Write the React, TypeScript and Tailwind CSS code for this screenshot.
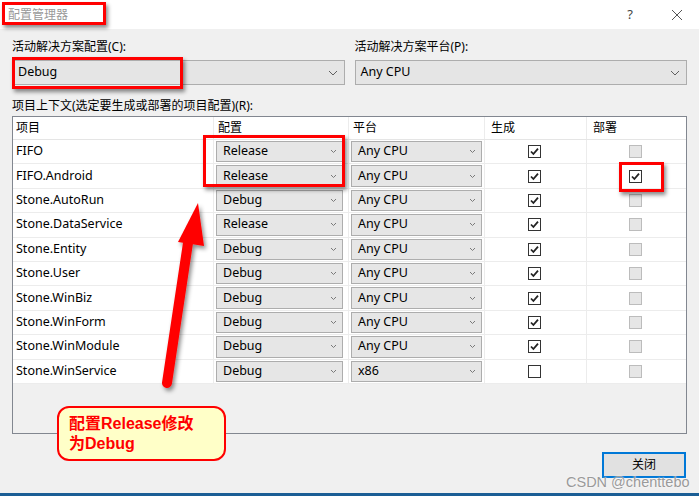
import type { ReactNode } from "react";

type Row = {
  name: string;
  config: string;
  platform: string;
  build: boolean;
  deploy: boolean;
};

const rows: Row[] = [
  { name: "FIFO", config: "Release", platform: "Any CPU", build: true, deploy: false },
  { name: "FIFO.Android", config: "Release", platform: "Any CPU", build: true, deploy: true },
  { name: "Stone.AutoRun", config: "Debug", platform: "Any CPU", build: true, deploy: false },
  { name: "Stone.DataService", config: "Release", platform: "Any CPU", build: true, deploy: false },
  { name: "Stone.Entity", config: "Debug", platform: "Any CPU", build: true, deploy: false },
  { name: "Stone.User", config: "Debug", platform: "Any CPU", build: true, deploy: false },
  { name: "Stone.WinBiz", config: "Debug", platform: "Any CPU", build: true, deploy: false },
  { name: "Stone.WinForm", config: "Debug", platform: "Any CPU", build: true, deploy: false },
  { name: "Stone.WinModule", config: "Debug", platform: "Any CPU", build: true, deploy: false },
  { name: "Stone.WinService", config: "Debug", platform: "x86", build: false, deploy: false },
];

const cols = "grid grid-cols-[201px_135px_136px_102px_1fr]";

function Chevron({ small }: { small?: boolean }) {
  return small ? (
    <svg width="7" height="5" viewBox="0 0 7 5" className="shrink-0">
      <path d="M1 1 L3.5 3.5 L6 1" fill="none" stroke="#7a7a7a" strokeWidth="1" />
    </svg>
  ) : (
    <svg width="10" height="6" viewBox="0 0 10 6" className="shrink-0">
      <path d="M1 1 L5 5 L9 1" fill="none" stroke="#606060" strokeWidth="1" />
    </svg>
  );
}

function Combo({ value }: { value: string }) {
  return (
    <div className="flex h-[25px] items-center justify-between border border-[#adadad] bg-[#e5e5e5] pl-[5px] pr-[6px] text-[12.5px] text-black">
      <span>{value}</span>
      <Chevron />
    </div>
  );
}

function CellCombo({ value }: { value: string }) {
  return (
    <div className="flex h-full items-center justify-between border border-[#adadad] bg-[#e6e6e6] pl-[6px] pr-[5px] text-[12.5px] text-black">
      <span>{value}</span>
      <Chevron small />
    </div>
  );
}

function Check({ checked, disabled }: { checked: boolean; disabled?: boolean }) {
  if (disabled) {
    return <div className="h-[13px] w-[13px] border border-[#bcbcbc] bg-[#e6e6e6]" />;
  }
  return (
    <div className="flex h-[13px] w-[13px] items-center justify-center border border-[#333333] bg-white">
      {checked && (
        <svg width="11" height="11" viewBox="0 0 11 11">
          <path d="M2 5.5 L4.4 8 L9 2.6" fill="none" stroke="#222" strokeWidth="1.8" />
        </svg>
      )}
    </div>
  );
}

function Cell({ children, className = "" }: { children: ReactNode; className?: string }) {
  return (
    <div className={`flex items-center border-r border-[#ececec] ${className}`}>{children}</div>
  );
}

function RedBox({ className }: { className: string }) {
  return (
    <div
      className={`pointer-events-none absolute border-[3px] border-[#ff0000] shadow-[2px_3px_4px_rgba(0,0,0,0.45)] ${className}`}
    />
  );
}

export default function App() {
  return (
    <div className="relative flex h-[496px] w-[699px] flex-col overflow-hidden bg-[#f0f0f0] font-['Noto_Sans','Noto_Sans_CJK_SC',sans-serif] text-[12px] text-black">
      {/* title bar */}
      <div className="flex h-[29px] shrink-0 items-center justify-between bg-white pl-[8px]">
        <span className="text-[12px] text-[#999999]">配置管理器</span>
        <div className="flex items-center text-[#444]">
          <span className="mr-[38px] text-[13px]">?</span>
          <svg width="12" height="12" viewBox="0 0 12 12" className="mr-[16px]">
            <path d="M1 1 L11 11 M11 1 L1 11" stroke="#555" strokeWidth="1" />
          </svg>
        </div>
      </div>

      {/* body */}
      <div className="flex flex-1 flex-col px-[12px] pt-[10px]">
        <div className="grid grid-cols-2 gap-[10px]">
          <div>
            <div className="h-[16px] leading-[16px]">活动解决方案配置(C):</div>
            <div className="mt-[5px]">
              <Combo value="Debug" />
            </div>
          </div>
          <div>
            <div className="h-[16px] leading-[16px]">活动解决方案平台(P):</div>
            <div className="mt-[5px]">
              <Combo value="Any CPU" />
            </div>
          </div>
        </div>

        <div className="mt-[13px] h-[16px] leading-[16px]">项目上下文(选定要生成或部署的项目配置)(R):</div>

        <div className="mt-[2px] flex h-[318px] flex-col border border-[#828790]">
          <div className={`${cols} h-[23px] shrink-0 border-b border-[#e5e5e5] bg-white`}>
            <Cell className="pl-[3px]">项目</Cell>
            <Cell className="pl-[4px]">配置</Cell>
            <Cell className="pl-[4px]">平台</Cell>
            <Cell className="pl-[6px]">生成</Cell>
            <div className="flex items-center pl-[6px]">部署</div>
          </div>
          {rows.map((r) => (
            <div
              key={r.name}
              className={`${cols} h-[24.4px] shrink-0 border-b border-[#ececec] bg-white text-[12.5px]`}
            >
              <Cell className="pl-[3px]">{r.name}</Cell>
              <Cell className="py-[1px] pl-[2px] pr-[5px]">
                <div className="h-full w-full">
                  <CellCombo value={r.config} />
                </div>
              </Cell>
              <Cell className="py-[1px] pl-[2px] pr-[2px]">
                <div className="h-full w-full">
                  <CellCombo value={r.platform} />
                </div>
              </Cell>
              <Cell className="justify-center pr-[2px]">
                <Check checked={r.build} />
              </Cell>
              <div className="flex items-center justify-center pr-[2px]">
                <Check checked={r.deploy} disabled={!r.deploy} />
              </div>
            </div>
          ))}
          <div className="flex-1 bg-[#f0f0f0]" />
        </div>

        <div className="mt-[18px] flex justify-end pr-[1px]">
          <div className="flex h-[26px] w-[84px] items-center justify-center border-2 border-[#0078d7] bg-[#e1e1e1] text-[12px]">
            关闭
          </div>
        </div>
      </div>

      <div className="h-[3px] shrink-0 bg-[#1b5e95]" />

      {/* annotations */}
      <RedBox className="left-[2px] top-[2px] h-[23px] w-[104px]" />
      <RedBox className="left-[12px] top-[57px] h-[32px] w-[171px]" />
      <RedBox className="left-[203px] top-[135px] h-[52px] w-[142px]" />
      <RedBox className="left-[619px] top-[162px] h-[30px] w-[45px]" />

      <svg
        className="pointer-events-none absolute left-0 top-0"
        width="699"
        height="496"
        viewBox="0 0 699 496"
      >
        <defs>
          <filter id="sh" x="-20%" y="-20%" width="140%" height="140%">
            <feDropShadow dx="2" dy="3" stdDeviation="2" floodColor="#000" floodOpacity="0.45" />
          </filter>
        </defs>
        <g filter="url(#sh)">
          <path d="M167 383 L188 243" stroke="#ff0000" strokeWidth="10" strokeLinecap="round" fill="none" />
          <polygon points="198,203 178,242 204,246" fill="#ff0000" />
        </g>
      </svg>

      <div className="absolute left-[57px] top-[406px] flex h-[55px] w-[169px] flex-col justify-center rounded-[12px] border-2 border-[#ff0000] bg-[#ffffc8] pl-[10px] font-['Liberation_Sans','Noto_Sans_CJK_SC',sans-serif] text-[16px] font-bold leading-[20px] text-[#ff0000]">
        <span>配置Release修改</span>
        <span>为Debug</span>
      </div>

      <div className="absolute left-[566px] top-[472px] font-['Liberation_Sans',sans-serif] text-[14.5px] text-[#9a9a9a] [text-shadow:0_0_2px_#fff]">
        CSDN @chenttebo
      </div>
    </div>
  );
}
